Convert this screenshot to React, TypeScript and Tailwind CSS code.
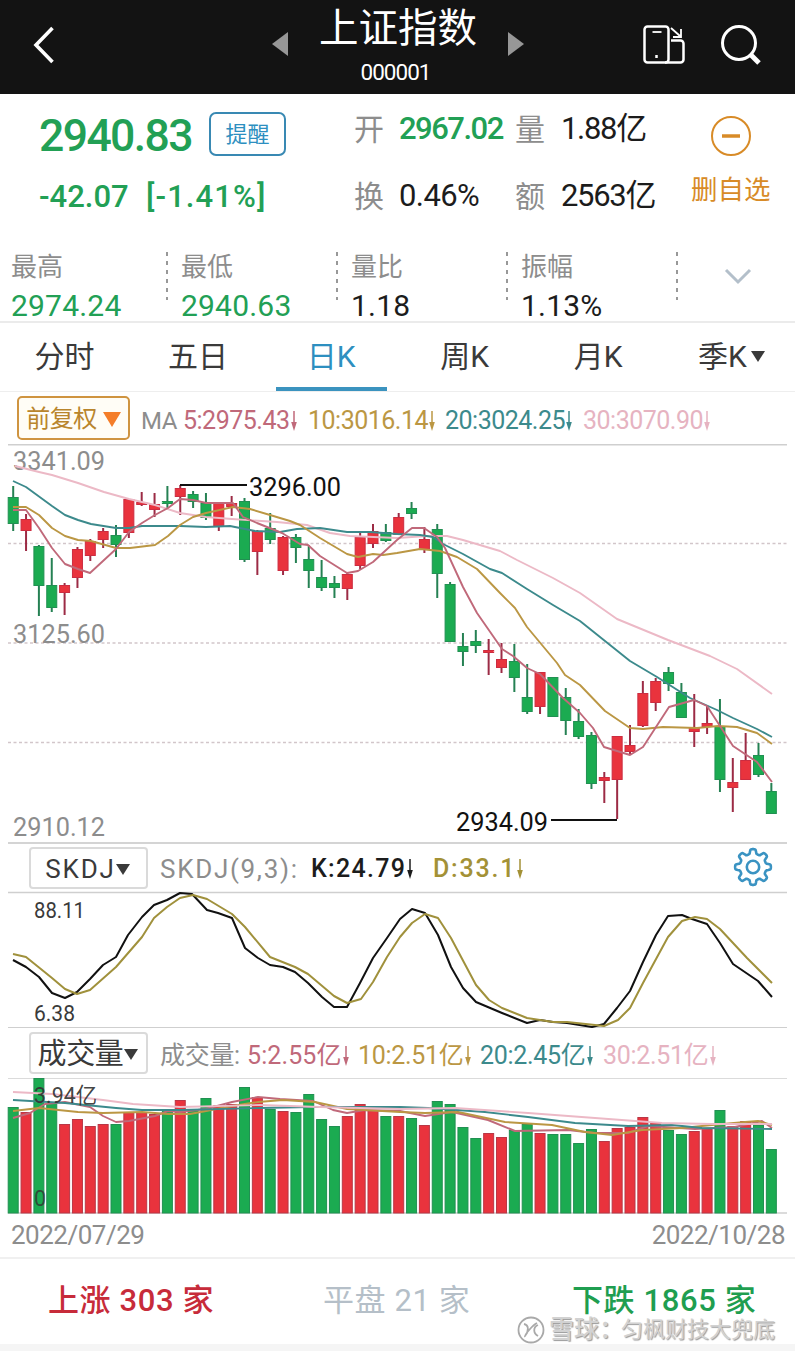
import clsx from "clsx";

type Candle = [high: number, top: number, bottom: number, low: number, volume: number, up: 0 | 1];

// y positions of wick, body and volume bar, one row per trading day
const candles: Candle[] = [
  [486, 497, 524, 531, 1107, 0],
  [514, 519, 531, 551, 1112, 1],
  [545, 546, 586, 616, 1078, 0],
  [558, 585, 608, 612, 1103, 0],
  [583, 585, 593, 615, 1124, 1],
  [547, 549, 578, 588, 1119, 1],
  [539, 541, 556, 561, 1126, 1],
  [528, 531, 540, 548, 1124, 1],
  [525, 535, 545, 557, 1124, 0],
  [499, 499, 533, 538, 1112, 1],
  [492, 502, 505, 506, 1112, 1],
  [493, 504, 510, 517, 1114, 1],
  [486, 501, 504, 508, 1109, 0],
  [485, 488, 497, 515, 1100, 1],
  [491, 494, 502, 508, 1110, 0],
  [493, 503, 518, 520, 1098, 0],
  [503, 503, 527, 531, 1105, 1],
  [496, 503, 507, 516, 1104, 1],
  [498, 501, 560, 562, 1087, 0],
  [530, 531, 552, 575, 1097, 1],
  [513, 528, 540, 544, 1109, 0],
  [536, 537, 571, 575, 1111, 1],
  [534, 537, 548, 563, 1112, 0],
  [545, 559, 571, 588, 1094, 0],
  [560, 577, 588, 591, 1119, 0],
  [576, 583, 588, 598, 1126, 0],
  [572, 574, 589, 600, 1116, 1],
  [533, 537, 566, 569, 1104, 1],
  [524, 531, 544, 548, 1110, 1],
  [524, 532, 541, 542, 1116, 0],
  [513, 517, 535, 535, 1116, 1],
  [502, 508, 514, 519, 1118, 0],
  [527, 539, 550, 553, 1125, 1],
  [524, 529, 574, 598, 1101, 0],
  [582, 584, 642, 642, 1104, 0],
  [633, 646, 652, 666, 1127, 0],
  [630, 641, 646, 653, 1138, 0],
  [639, 650, 653, 675, 1133, 1],
  [643, 659, 668, 673, 1137, 1],
  [644, 661, 678, 692, 1130, 0],
  [664, 697, 712, 714, 1124, 0],
  [672, 672, 707, 714, 1133, 1],
  [677, 677, 717, 717, 1134, 0],
  [688, 697, 721, 735, 1134, 0],
  [709, 721, 737, 739, 1143, 0],
  [732, 735, 784, 789, 1129, 0],
  [772, 777, 781, 803, 1141, 1],
  [736, 736, 780, 819, 1128, 1],
  [725, 745, 752, 754, 1127, 1],
  [681, 693, 726, 727, 1117, 1],
  [678, 681, 703, 711, 1122, 1],
  [667, 672, 684, 691, 1130, 0],
  [683, 692, 718, 718, 1134, 0],
  [694, 728, 732, 747, 1131, 1],
  [705, 723, 727, 734, 1129, 1],
  [699, 726, 780, 792, 1110, 0],
  [758, 782, 788, 812, 1126, 1],
  [733, 760, 780, 780, 1121, 1],
  [743, 755, 775, 777, 1125, 0],
  [783, 791, 814, 814, 1149, 0],
];

const RED = "#e9333d";
const GREEN = "#1bab51";
const MA5 = "#c0697a";
const MA10 = "#bb9744";
const MA20 = "#3c8a8c";
const MA30 = "#ecb9c6";

const xAt = (i: number) => 13.2 + i * 12.85;

const priceLines = [
  {
    color: MA30,
    points:
      "15,466 39,472 52,475 78,483 104,492 129,499 155,505 180,513 206,517 232,519 277,522 307,525 330,533 350,536 397,538 427,536 447,536 463,540 500,551 517,560 553,578 580,593 617,619 668,640 710,656 737,669 772,694",
  },
  {
    color: MA20,
    points:
      "13,481 26,487 52,506 65,515 78,520 91,524 116,528 129,528 142,526 180,526 206,527 230,526 255,531 280,532 297,529 320,528 347,532 370,532 397,534 420,535 433,537 443,544 463,554 490,569 502,573 527,589 553,605 580,621 630,661 657,677 690,698 717,710 733,718 757,729 772,737",
  },
  {
    color: MA10,
    points:
      "13,507 26,507 39,515 52,528 65,536 78,540 91,541 116,548 130,548 155,545 168,536 180,525 193,517 206,513 233,507 250,509 270,515 290,521 300,525 320,538 347,554 358,557 373,554 383,555 397,553 420,549 440,551 457,557 477,569 500,593 515,608 527,627 557,663 565,675 580,685 605,711 630,728 643,729 663,727 697,728 718,726 737,727 757,733 772,744",
  },
  {
    color: MA5,
    points:
      "13,510 26,510 39,528 52,548 65,564 78,569 90,573 116,549 129,532 142,523 155,515 168,508 180,499 193,500 206,503 233,503 243,517 257,523 282,533 300,544 308,545 320,556 347,573 358,571 373,562 397,540 412,528 424,528 437,537 445,548 463,587 477,613 502,649 513,656 527,668 540,674 563,698 580,713 593,728 604,747 630,755 643,747 669,707 694,700 707,706 733,746 757,762 772,782",
  },
];

const kLine =
  "13,960 26,967 39,977 52,993 65,998 77,992 90,979 103,965 116,957 128,935 142,917 154,905 167,900 180,893 192,894 207,910 218,913 232,918 245,948 258,958 270,965 283,967 295,972 308,983 322,997 334,1007 347,1007 360,983 373,958 387,938 400,919 412,909 425,913 438,935 451,967 463,988 476,1002 502,1013 527,1023 540,1020 553,1022 567,1023 592,1027 604,1024 617,1008 630,991 643,962 656,935 668,916 682,915 692,919 707,924 720,943 733,964 758,981 772,997";
const dLine =
  "13,954 26,957 52,978 65,989 77,994 90,990 116,967 142,937 154,918 167,907 180,898 193,895 207,899 232,914 245,927 270,957 295,967 308,974 334,996 347,1003 361,999 373,982 387,957 400,937 412,923 425,914 438,918 451,938 476,985 489,1000 502,1008 527,1018 553,1022 567,1022 595,1025 604,1026 618,1020 630,1008 643,983 668,937 682,921 695,917 707,919 720,929 747,958 772,983";

const volumeLines = [
  {
    color: MA5,
    points:
      "13,1118 30,1113 45,1104 65,1102 90,1107 103,1116 116,1122 129,1121 155,1116 168,1111 180,1112 206,1109 232,1102 258,1097 280,1099 313,1101 333,1110 347,1113 365,1110 400,1111 425,1116 452,1112 488,1120 515,1131 568,1130 595,1133 628,1133 648,1126 695,1129 735,1127 762,1121 772,1128",
  },
  {
    color: MA10,
    points:
      "13,1111 39,1108 78,1112 103,1113 142,1112 168,1114 190,1114 206,1111 232,1106 258,1102 283,1100 315,1102 347,1109 400,1112 425,1113 458,1112 505,1122 552,1125 585,1132 612,1135 642,1130 682,1128 712,1125 745,1122 758,1121 772,1125",
  },
  {
    color: MA20,
    points:
      "13,1100 65,1103 116,1108 142,1110 180,1110 260,1108 310,1107 347,1107 400,1107 428,1108 485,1112 528,1117 575,1123 628,1126 672,1125 702,1128 772,1129",
  },
  {
    color: MA30,
    points: "13,1092 52,1094 103,1100 133,1104 180,1107 260,1105 320,1107 400,1109 455,1108 528,1113 595,1118 662,1123 712,1124 772,1124",
  },
];

const Label = ({
  x,
  y,
  width,
  size,
  fill,
  children,
}: {
  x: number;
  y: number;
  width?: number;
  size: number;
  fill: string;
  children: string;
}) => (
  <text x={x} y={y} fontSize={size} fill={fill} textLength={width} lengthAdjust="spacingAndGlyphs">
    {children}
  </text>
);

const DownArrow = () => (
  <svg width="8" height="20" viewBox="0 0 8 20" className="shrink-0">
    <path d="M4 0V13" stroke="currentColor" strokeWidth="1.5" />
    <path d="M1.2 11h5.6L4 20z" fill="currentColor" />
  </svg>
);

const Caret = ({ className }: { className?: string }) => (
  <svg width="14" height="11" viewBox="0 0 14 11" className={clsx("shrink-0", className)}>
    <path d="M0 0h14L7 11z" fill="currentColor" />
  </svg>
);

const Header = () => (
  <header className="flex h-[94px] items-center bg-[#131313] text-white">
    <svg width="22" height="38" viewBox="0 0 22 38" fill="none" className="mt-[-5px] ml-[33px]">
      <path d="M19.500 2L3 19l16.500 17" stroke="#fff" strokeWidth="3.600" />
    </svg>
    <svg width="16" height="24" className="mt-[-6px] ml-[217px]">
      <path d="M16 0v24L0 12z" fill="#979797" />
    </svg>
    <div className="flex h-full w-[220px] flex-col items-center">
      <h1 className="mt-[4px] h-[50px] text-[39.5px] leading-[50px] font-normal">上证指数</h1>
      <span className="mt-[5px] mr-[5px] text-[22.5px] leading-[26px] tracking-[-1px]">000001</span>
    </div>
    <svg width="16" height="24" className="mt-[-6px]">
      <path d="M0 0v24l16-12z" fill="#979797" />
    </svg>
    <svg width="42" height="40" viewBox="0 0 42 40" fill="none" stroke="#fff" strokeWidth="2.500" className="mt-[-5px] ml-[119px]">
      <rect x="1.500" y="1.500" width="24" height="36" rx="3" />
      <path d="M9.500 7h9" strokeWidth="1.800" />
      <path d="M13.500 30v3" />
      <path d="M28 15.500h9.500a3 3 0 0 1 3 3v16a3 3 0 0 1-3 3H22" />
      <path d="M28 3l9 8M38 4v8h-8" strokeWidth="1.800" />
    </svg>
    <svg width="42" height="42" viewBox="0 0 42 42" fill="none" stroke="#fff" className="mt-[-4px] ml-[35px]">
      <circle cx="19" cy="19" r="16.500" strokeWidth="3" />
      <path d="M31 31l8 8" strokeWidth="5" />
    </svg>
  </header>
);

const Quote = () => (
  <section className="flex h-[140px] pl-[39px]">
    <div className="w-[315px] text-[#22a055]">
      <div className="flex h-[84px] items-center">
        <span className="w-[170px] text-[44.5px] font-medium tracking-[-1.600px] whitespace-nowrap">2940.83</span>
        <button className="mt-[-4px] h-[44px] w-[77px] rounded-[7px] border-2 border-[#3989b3] pt-[2px] text-[22px] leading-[38px] text-[#2d8fc0]">
          提醒
        </button>
      </div>
      <div className="flex h-[36px] items-center pt-[2px] text-[31px] font-medium">
        <span className="w-[107px]">-42.07</span>
        <span className="tracking-[1.100px]">[-1.41%]</span>
      </div>
    </div>
    <div className="grid w-[330px] grid-cols-[45px_116px_46px_120px] grid-rows-[70px_64px] items-center text-[31px] tracking-[-1.300px] whitespace-nowrap text-[#1c1c1c]">
      <span className="text-[30px] text-[#8d8d8d]">开</span>
      <span className="font-medium tracking-[-1.500px] text-[#22a055]">2967.02</span>
      <span className="text-[30px] text-[#8d8d8d]">量</span>
      <span>1.88亿</span>
      <span className="text-[30px] text-[#8d8d8d]">换</span>
      <span className="tracking-[-0.600px]">0.46%</span>
      <span className="text-[30px] text-[#8d8d8d]">额</span>
      <span>2563亿</span>
    </div>
    <div className="ml-[7px] flex flex-col items-center pt-[21px] text-[#d88b27]">
      <svg width="42" height="42" fill="none" stroke="currentColor">
        <circle cx="21" cy="21" r="19" strokeWidth="2" />
        <path d="M12 21h18" strokeWidth="3.500" />
      </svg>
      <span className="mt-[15px] text-[26.5px] leading-[36px]">删自选</span>
    </div>
  </section>
);

const stats = [
  { name: "最高", value: "2974.24", green: true },
  { name: "最低", value: "2940.63", green: true },
  { name: "量比", value: "1.18", green: false },
  { name: "振幅", value: "1.13%", green: false },
];

const Stats = () => (
  <section className="flex h-[89px] border-b-2 border-[#ebebeb] pt-[14px] pl-[11px]">
    {stats.map((s) => (
      <div key={s.name} className="flex w-[170px]">
        <div className="w-[155px]">
          <div className="h-[38px] pt-[1px] text-[26px] leading-[36px] text-[#8d8d8d]">{s.name}</div>
          <div
            className={clsx(
              "text-[30px] leading-[40px] tracking-[0.200px]",
              s.green ? "text-[#22a055]" : "text-[#1c1c1c]"
            )}
          >
            {s.value}
          </div>
        </div>
        <svg width="2" height="48" className="mt-[4px]">
          <path d="M1 0v48" stroke="#777" strokeWidth="1.500" strokeDasharray="4 5" />
        </svg>
      </div>
    ))}
    <svg width="28" height="18" fill="none" className="mt-[20px] ml-[33px]">
      <path d="M2 2l12 12L26 2" stroke="#b3bfca" strokeWidth="3" />
    </svg>
  </section>
);

const tabs = ["分时", "五日", "日K", "周K", "月K", "季K"];

const Tabs = () => (
  <nav className="flex h-[69px] justify-between border-b border-[#eeeeee] pr-[8px] pl-[9px]">
    {tabs.map((t) => (
      <div
        key={t}
        className={clsx(
          "flex w-[111px] items-center justify-center border-b-4 pt-[3px] text-[30px]",
          t === "日K" ? "border-[#3b93bf] text-[#2d8fc0]" : "border-transparent text-[#3a3a3a]"
        )}
      >
        {t}
        {t === "季K" && <Caret className="ml-[4px]" />}
      </div>
    ))}
  </nav>
);

const Averages = () => (
  <div className="flex h-[52px] items-center pt-[2px] pb-[2px] pl-[17px] text-[25px] tracking-[-0.500px] whitespace-nowrap">
    <button className="flex h-[44px] w-[113px] items-center justify-center rounded-[5px] border-2 border-[#cf9440] bg-[#fffdf6] pt-[2px] text-[24px] text-[#b9852c]">
      前复权
      <svg width="18" height="15" className="ml-[6px]">
        <path d="M0 0h18L9 15z" fill="#f47d28" />
      </svg>
    </button>
    <span className="ml-[11px] w-[42px] pt-[5px] text-[24px] text-[#8d8d8d]">MA</span>
    <span className="flex w-[125px] items-center pt-[5px] text-[#c0697a]">
      5:2975.43
      <DownArrow />
    </span>
    <span className="flex w-[137px] items-center pt-[5px] text-[#bb9744]">
      10:3016.14
      <DownArrow />
    </span>
    <span className="flex w-[138px] items-center pt-[5px] text-[#3c8a8c]">
      20:3024.25
      <DownArrow />
    </span>
    <span className="flex items-center pt-[5px] text-[#e6b3c1]">
      30:3070.90
      <DownArrow />
    </span>
  </div>
);

const PriceChart = () => (
  <svg width="795" height="398" viewBox="0 444 795 398" fill="none" className="block">
    <path d="M8 444.500h779" stroke="#cfcfcf" strokeWidth="2" />
    {[543.5, 643, 742.5].map((y) => (
      <path key={y} d={`M8 ${y}h779`} stroke="#d2c6ca" strokeWidth="1.300" strokeDasharray="3 2.500" />
    ))}
    <Label x={13} y={470} width={92} size={25} fill="#8d8d8d">
      3341.09
    </Label>
    <Label x={13} y={643} width={92} size={25} fill="#8d8d8d">
      3125.60
    </Label>
    <Label x={13} y={836} width={92} size={25} fill="#8d8d8d">
      2910.12
    </Label>
    {candles.map(([high, top, bottom, low, , up], i) => (
      <g key={i}>
        <path d={`M${xAt(i)} ${high}V${low}`} stroke={up ? "#9c2b45" : "#258153"} strokeWidth="2" />
        <rect
          x={xAt(i) - 5}
          y={top + 0.5}
          width="10"
          height={bottom - top - 1}
          fill={up ? RED : GREEN}
          stroke={up ? "#cc2c40" : "#219052"}
        />
      </g>
    ))}
    {priceLines.map((l) => (
      <polyline key={l.color} points={l.points} stroke={l.color} strokeWidth="1.900" strokeLinejoin="round" />
    ))}
    <path d="M180 485H247M551 820H617" stroke="#111" strokeWidth="2" />
    <Label x={249} y={496} width={92} size={25} fill="#111">
      3296.00
    </Label>
    <Label x={456} y={831} width={92} size={25} fill="#111">
      2934.09
    </Label>
  </svg>
);

const gearPath = () => {
  const pts: string[] = [];
  for (let i = 0; i <= 128; i++) {
    const a = (i / 128) * Math.PI * 2;
    const r = 15.6 + 2.3 * Math.tanh(2.6 * Math.cos(8 * a));
    pts.push(`${(20 + r * Math.sin(a)).toFixed(2)},${(20 - r * Math.cos(a)).toFixed(2)}`);
  }
  return `M${pts.join("L")}Z`;
};

const SkdjBar = () => (
  <div className="mx-[8px] flex h-[50px] items-center border-t-2 border-[#d4d4d4] pl-[21px] text-[25px] whitespace-nowrap">
    <button className="flex h-[42px] w-[119px] items-center justify-center rounded-[4px] border-2 border-[#dadada] pt-[2px] pr-[2px] text-[26px] tracking-[1.800px] text-[#3a3a3a]">
      SKDJ
      <Caret />
    </button>
    <span className="ml-[12px] w-[151px] pt-[2px] text-[26px] tracking-[1.700px] text-[#8d8d8d]">SKDJ(9,3):</span>
    <span className="flex w-[122px] items-center pt-[2px] font-medium tracking-[1.300px] text-[#1c1c1c]">
      K:24.79
      <DownArrow />
    </span>
    <span className="flex w-[300px] items-center pt-[2px] font-medium tracking-[1.800px] text-[#a39136]">
      D:33.1
      <DownArrow />
    </span>
    <svg width="40" height="40" fill="none" stroke="#3a93c2" strokeWidth="2.600" className="mt-[-2px]">
      <path d={gearPath()} strokeLinejoin="round" />
      <circle cx="20" cy="20" r="6.200" />
    </svg>
  </div>
);

const SkdjChart = () => (
  <svg width="795" height="135" viewBox="0 892 795 135" fill="none" className="block overflow-visible">
    <path d="M8 892.500h779" stroke="#cfcfcf" strokeWidth="1.500" />
    <Label x={34} y={918} width={51} size={21.5} fill="#3a3a3a">
      88.11
    </Label>
    <Label x={34} y={1021} width={41} size={21.5} fill="#3a3a3a">
      6.38
    </Label>
    <polyline points={kLine} stroke="#111" strokeWidth="2" strokeLinejoin="round" />
    <polyline points={dLine} stroke="#a0913c" strokeWidth="2" strokeLinejoin="round" />
  </svg>
);

const VolumeBar = () => (
  <div className="mx-[8px] flex h-[51px] items-center border-t-[1.500px] border-[#cfcfcf] pl-[21px] text-[25px] tracking-[-0.300px] whitespace-nowrap">
    <button className="flex h-[42px] w-[119px] items-center justify-center rounded-[4px] border-2 border-[#dadada] pt-[3px] pr-[2px] text-[29px] text-[#3a3a3a]">
      成交量
      <Caret />
    </button>
    <span className="ml-[12px] w-[87px] pt-[6px] text-[#8d8d8d]">成交量:</span>
    <span className="flex w-[111px] items-center pt-[6px] tracking-[0.100px] text-[#c0697a]">
      5:2.55亿
      <DownArrow />
    </span>
    <span className="flex w-[122px] items-center pt-[6px] text-[#bb9744]">
      10:2.51亿
      <DownArrow />
    </span>
    <span className="flex w-[123px] items-center pt-[6px] text-[#3c8a8c]">
      20:2.45亿
      <DownArrow />
    </span>
    <span className="flex items-center pt-[6px] text-[#e6b3c1]">
      30:2.51亿
      <DownArrow />
    </span>
  </div>
);

const VolumeChart = () => (
  <svg width="795" height="136" viewBox="0 1078 795 136" fill="none" className="block">
    <path d="M8 1078h779M8 1213h779" stroke="#cfcfcf" strokeWidth="1.500" />
    {candles.map(([, , , , volume, up], i) => (
      <rect
        key={i}
        x={xAt(i) - 5}
        y={volume + 0.5}
        width="10"
        height={1212.5 - volume}
        fill={up ? RED : GREEN}
        stroke={up ? "#b93746" : "#219052"}
      />
    ))}
    {volumeLines.map((l) => (
      <polyline key={l.color} points={l.points} stroke={l.color} strokeWidth="1.900" strokeLinejoin="round" />
    ))}
    <Label x={34} y={1103} width={63} size={21.5} fill="#333333ee">
      3.94亿
    </Label>
    <Label x={34} y={1206} size={21.5} fill="#333333cc">
      0
    </Label>
  </svg>
);

const Breadth = () => (
  <footer className="relative flex h-[87px] items-center border-t-2 border-[#f0f0f0] text-[31px] font-medium tracking-[0.600px] whitespace-nowrap">
    <span className="ml-[48px] w-[275px] text-[#c72b3a]">上涨 303 家</span>
    <span className="w-[249px] font-normal text-[#b5bfc8]">平盘 21 家</span>
    <span className="text-[#1f9e50]">下跌 1865 家</span>
    <div className="absolute top-[57px] left-[517px] flex items-center text-[22px] leading-[26px] font-normal tracking-normal text-[#d2d2d2] [text-shadow:1px_1px_1px_#00000066]">
      <svg width="28" height="28" fill="none" stroke="#a9a9a9" strokeWidth="1.800">
        <circle cx="14" cy="14" r="12.500" />
        <path d="M7 8c5 1 5 7 1 12M20 7c-4 2-13 12-12 14M21 9c-5 2-5 8 0 11" />
      </svg>
      <span className="ml-[4px] w-[72px] text-[25px] font-medium">雪球：</span>
      <span>匀枫财技大兜底</span>
    </div>
  </footer>
);

export default function App() {
  return (
    <div className="h-[1351px] w-[795px] overflow-hidden bg-white font-['Roboto','Noto_Sans_CJK_SC',sans-serif]">
      <Header />
      <Quote />
      <Stats />
      <Tabs />
      <Averages />
      <PriceChart />
      <SkdjBar />
      <SkdjChart />
      <VolumeBar />
      <VolumeChart />
      <div className="flex h-[43px] items-center justify-between pr-[10px] pl-[11px] text-[26px] tracking-[-0.500px] text-[#8d8d8d]">
        <span>2022/07/29</span>
        <span>2022/10/28</span>
      </div>
      <Breadth />
      <div className="h-[7px] bg-[#f5f5f5]" />
    </div>
  );
}
